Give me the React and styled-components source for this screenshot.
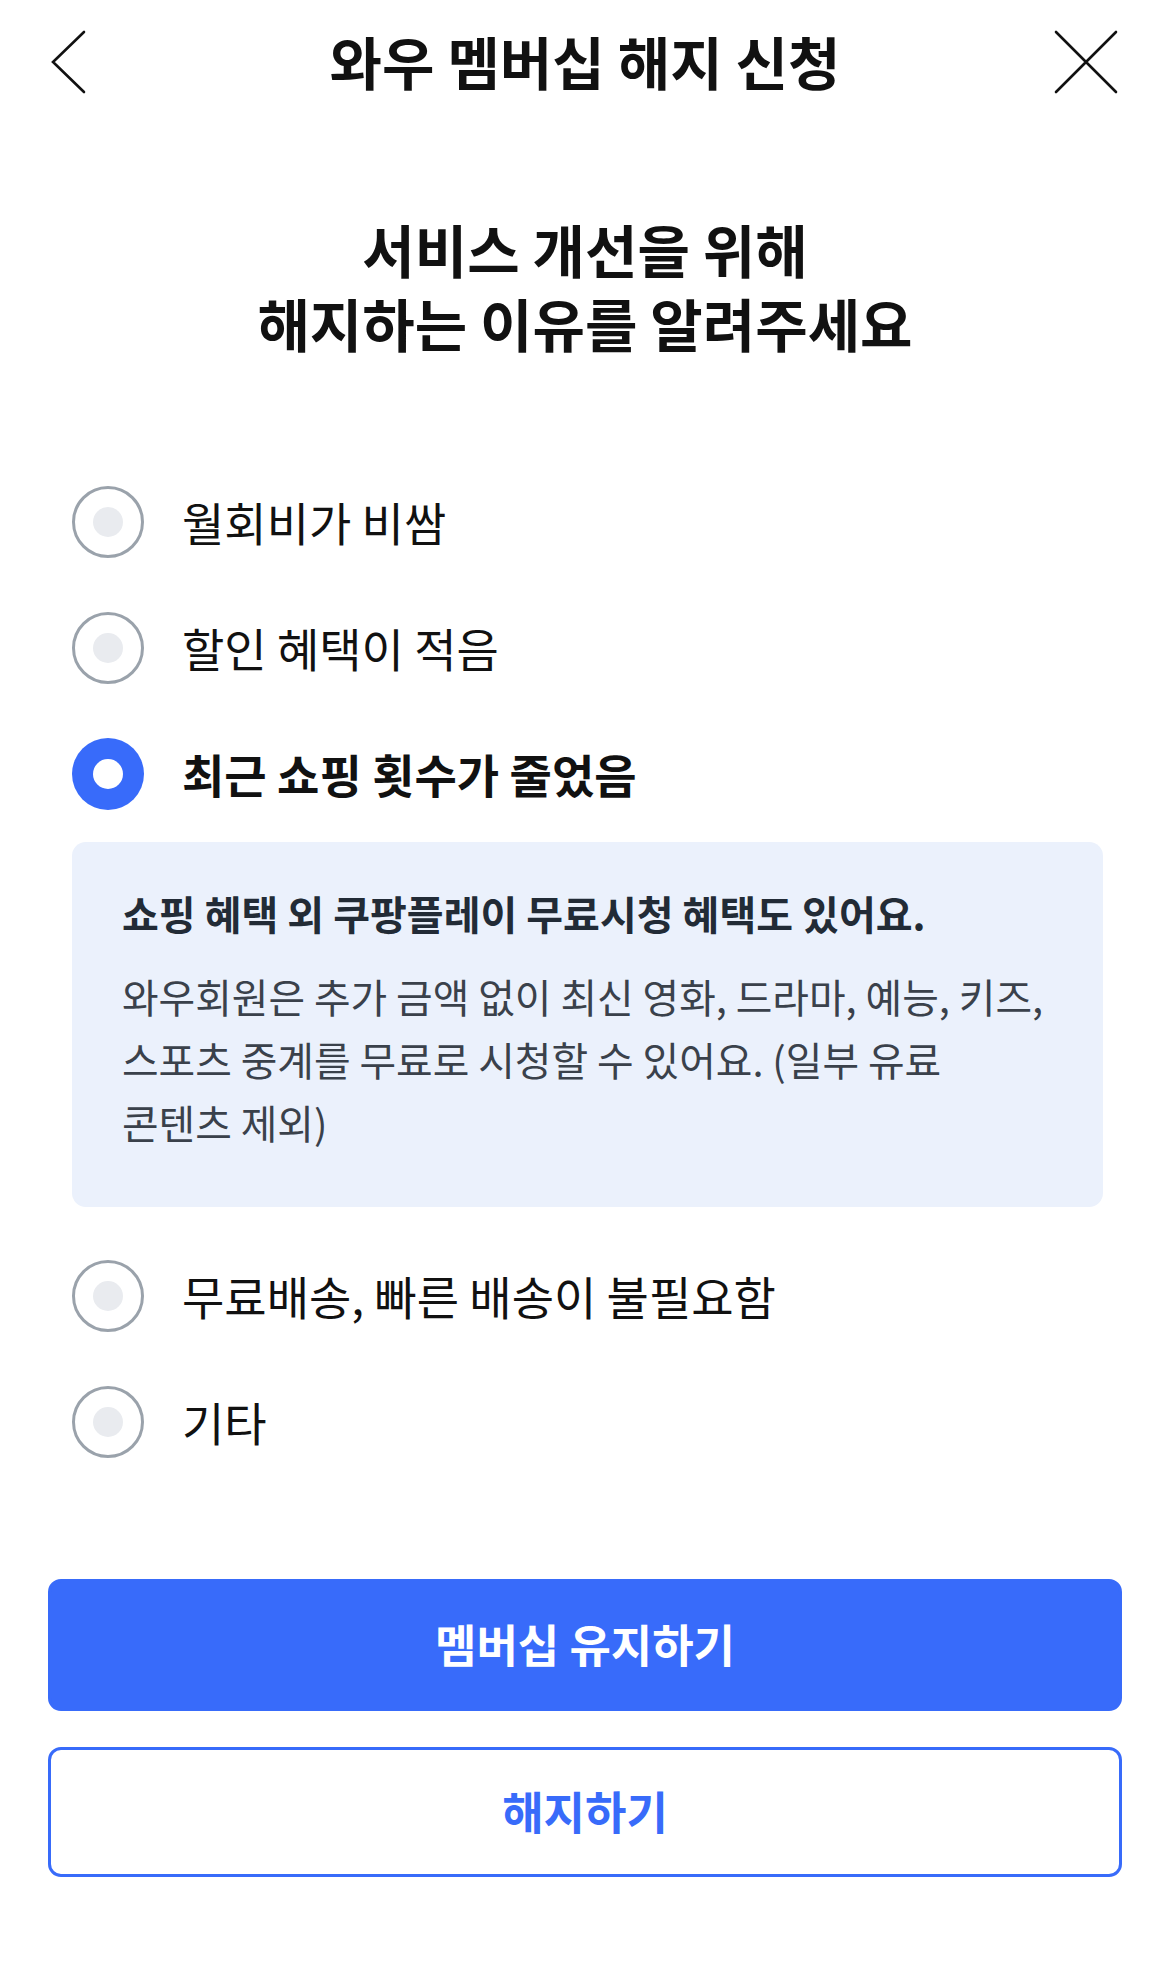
import React, { useState } from "react";
import styled, { createGlobalStyle } from "styled-components";

const GlobalStyle = createGlobalStyle`
  html, body { margin: 0; padding: 0; background: #ffffff; }
  body {
    font-family: "Noto Sans CJK KR", "Noto Sans", sans-serif;
    color: #111111;
    -webkit-font-smoothing: antialiased;
  }
  * { box-sizing: border-box; }
`;

const BLUE = "#386bfa";

const Page = styled.div`
  width: 1170px;
  min-height: 1977px;
  background: #ffffff;
  display: flex;
  flex-direction: column;
`;

const Header = styled.header`
  display: grid;
  grid-template-columns: 1fr auto 1fr;
  align-items: center;
  padding: 30px 45px 0;
  height: 94px;
`;

const IconButton = styled.button`
  border: none;
  background: none;
  padding: 0;
  width: 70px;
  height: 64px;
  justify-self: ${(p) => (p.$end ? "end" : "start")};
  cursor: pointer;
  svg { display: block; overflow: visible; }
`;

const Title = styled.h1`
  margin: -4px 0 0;
  font-size: 57px;
  font-weight: 700;
  line-height: 64px;
  color: #111111;
  text-align: center;
`;

const Heading = styled.h2`
  margin: 117px 0 0;
  font-size: 57px;
  font-weight: 700;
  line-height: 74px;
  text-align: center;
  color: #111111;
`;

const List = styled.div`
  margin-top: 100px;
  padding: 0 67px 0 72px;
  display: flex;
  flex-direction: column;
`;

const Row = styled.label`
  display: flex;
  align-items: center;
  gap: 38px;
  height: 126px;
  cursor: pointer;
`;

const Radio = styled.span`
  width: 72px;
  height: 72px;
  border-radius: 50%;
  flex: none;
  display: flex;
  align-items: center;
  justify-content: center;
  background: ${(p) => (p.$on ? BLUE : "#ffffff")};
  border: ${(p) => (p.$on ? "none" : "3px solid #9aa2ab")};
  &::after {
    content: "";
    width: 30px;
    height: 30px;
    border-radius: 50%;
    background: ${(p) => (p.$on ? "#ffffff" : "#e9ebef")};
  }
`;

const RowText = styled.span`
  font-size: 46px;
  line-height: 56px;
  font-weight: ${(p) => (p.$on ? 700 : 400)};
  color: #111111;
  margin-top: -2px;
`;

const InfoBox = styled.div`
  margin: 5px 0 26px;
  background: #ebf1fc;
  border-radius: 14px;
  padding: 46px 55px 54px 50px;
`;

const InfoTitle = styled.p`
  margin: 0;
  font-size: 40px;
  line-height: 50px;
  font-weight: 700;
  color: #222b36;
`;

const InfoBody = styled.p`
  margin: 26px 0 0;
  font-size: 39.8px;
  line-height: 63px;
  font-weight: 400;
  color: #3a414b;
  word-break: keep-all;
`;

const Buttons = styled.div`
  margin-top: 94px;
  padding: 0 48px;
  display: flex;
  flex-direction: column;
  gap: 36px;
`;

const Button = styled.button`
  width: 100%;
  height: ${(p) => (p.$primary ? "132px" : "130px")};
  border-radius: 13px;
  border: 3px solid ${BLUE};
  background: ${(p) => (p.$primary ? BLUE : "#ffffff")};
  color: ${(p) => (p.$primary ? "#ffffff" : BLUE)};
  font-family: "Noto Sans CJK KR", "Noto Sans", sans-serif;
  font-size: 45px;
  font-weight: 700;
  line-height: 1;
  padding: 0 0 4px;
  cursor: pointer;
`;

const reasons = [
  "월회비가 비쌈",
  "할인 혜택이 적음",
  "최근 쇼핑 횟수가 줄었음",
  "무료배송, 빠른 배송이 불필요함",
  "기타",
];

export default function App() {
  const [selected, setSelected] = useState(2);
  return (
    <Page>
      <GlobalStyle />
      <Header>
        <IconButton aria-label="뒤로">
          <svg width="70" height="64" viewBox="0 0 70 64">
            <polyline
              points="39,2 8,32 39,62"
              fill="none"
              stroke="#111"
              strokeWidth="2.6"
              strokeLinecap="round"
              strokeLinejoin="miter"
            />
          </svg>
        </IconButton>
        <Title>와우 멤버십 해지 신청</Title>
        <IconButton $end aria-label="닫기">
          <svg width="70" height="64" viewBox="0 0 70 64">
            <path
              d="M1 2 L61 62 M61 2 L1 62"
              fill="none"
              stroke="#111"
              strokeWidth="2.6"
              strokeLinecap="round"
            />
          </svg>
        </IconButton>
      </Header>

      <Heading>
        서비스 개선을 위해
        <br />
        해지하는 이유를 알려주세요
      </Heading>

      <List>
        {reasons.map((r, i) => (
          <React.Fragment key={r}>
            <Row onClick={() => setSelected(i)}>
              <Radio $on={selected === i} />
              <RowText $on={selected === i}>{r}</RowText>
            </Row>
            {i === 2 && selected === 2 && (
              <InfoBox>
                <InfoTitle>쇼핑 혜택 외 쿠팡플레이 무료시청 혜택도 있어요.</InfoTitle>
                <InfoBody>
                  와우회원은 추가 금액 없이 최신 영화, 드라마, 예능, 키즈, 스포츠 중계를
                  무료로 시청할 수 있어요. (일부 유료 콘텐츠 제외)
                </InfoBody>
              </InfoBox>
            )}
          </React.Fragment>
        ))}
      </List>

      <Buttons>
        <Button $primary>멤버십 유지하기</Button>
        <Button>해지하기</Button>
      </Buttons>
    </Page>
  );
}
